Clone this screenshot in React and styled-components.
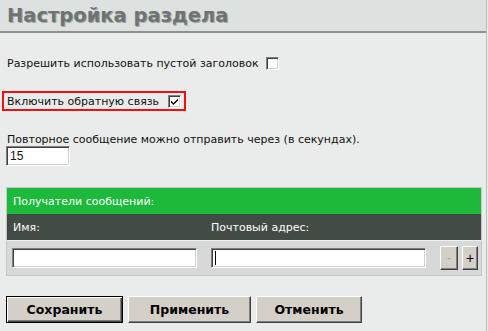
import React from "react";
import styled, { createGlobalStyle } from "styled-components";

const GlobalStyle = createGlobalStyle`
  * {
    margin: 0;
    padding: 0;
    box-sizing: border-box;
  }
  body {
    background: #e9ecea;
    font-family: Tahoma, "DejaVu Sans", sans-serif;
    font-size: 11px;
    color: #111;
  }
`

const Page = styled.div`
  width: 487px;
  min-height: 331px;
  border-right: 1px solid #b9bdbb;
`

const Header = styled.div`
  height: 33px;
  background: #dde1df;
  border-bottom: 2px solid #8e9190;
  padding-left: 7px;
  display: flex;
  align-items: center;
`

const Title = styled.h1`
  font-family: "DejaVu Sans", sans-serif;
  font-size: 19.5px;
  font-weight: bold;
  color: #6e7472;
  text-shadow: 1px 1px 0 #a3a8a6;
`

const Content = styled.div`
  padding: 0 6px;
`

const Row = styled.div`
  display: inline-flex;
  align-items: center;
  gap: ${p => (p.boxed ? 9 : 7)}px;
  margin-top: ${p => p.top}px;
  padding: ${p => (p.boxed ? "2px 3px 2px 3px" : "0 1px")};
  margin-left: ${p => (p.boxed ? "-4px" : "0")};
  border: ${p => (p.boxed ? "2px solid #ee1111" : "none")};
  height: ${p => (p.boxed ? "20px" : "auto")};
`

const Check = styled.span`
  width: 13px;
  height: 13px;
  background: #fff;
  border-top: 1px solid #808080;
  border-left: 1px solid #808080;
  border-right: 1px solid #fff;
  border-bottom: 1px solid #fff;
  box-shadow: inset 1px 1px 0 #404040, inset -1px -1px 0 #d4d0c8;
  display: inline-flex;
  align-items: center;
  justify-content: center;
`

const Label = styled.div`
  margin-top: 22px;
  padding-left: 1px;
`

const TextInput = styled.div`
  width: ${p => p.w}px;
  height: 20px;
  margin-left: ${p => p.ml || 0}px;
  background: #fff;
  border-top: 1px solid #808080;
  border-left: 1px solid #808080;
  border-right: 1px solid #fff;
  border-bottom: 1px solid #fff;
  box-shadow: inset 1px 1px 0 #404040, inset -1px -1px 0 #d4d0c8;
  padding: 2px 3px;
  font-size: 12px;
  font-family: "Liberation Sans", Arial, sans-serif;
  line-height: 15px;
  display: flex;
  align-items: center;
`

const Caret = styled.span`
  width: 1px;
  height: 14px;
  background: #000;
`

const Table = styled.div`
  margin-top: 21px;
  width: 476px;
  border: 1px solid #c3c7c5;
`

const GreenRow = styled.div`
  background: #1db93b;
  color: #fff;
  height: 26px;
  padding-left: 6px;
  display: flex;
  align-items: center;
`

const DarkRow = styled.div`
  background: #434b45;
  color: #fff;
  height: 27px;
  border-bottom: 1px solid #f0f0f0;
  display: grid;
  grid-template-columns: 198px 1fr;
  align-items: center;
  padding-left: 6px;
`

const InputRow = styled.div`
  background: #d6d9d7;
  height: 34px;
  display: flex;
  align-items: center;
  padding-left: 5px;
`

const SmallBtn = styled.div`
  width: ${p => p.w}px;
  height: 24px;
  margin-left: ${p => p.ml}px;
  background: #d4d0c8;
  border-top: 1px solid #fff;
  border-left: 1px solid #fff;
  border-right: 1px solid #404040;
  border-bottom: 1px solid #404040;
  box-shadow: inset -1px -1px 0 #808080;
  display: flex;
  align-items: center;
  justify-content: center;
  font-family: "Liberation Sans", Arial, sans-serif;
  font-size: 14px;
  color: ${p => p.c};
`

const Buttons = styled.div`
  display: flex;
  gap: 5px;
  margin-top: 20px;
`

const Button = styled.div`
  width: ${p => p.w}px;
  height: 27px;
  background: #d4d0c8;
  border: 1px solid ${p => (p.primary ? "#000" : "#fff")};
  border-right-color: ${p => (p.primary ? "#000" : "#404040")};
  border-bottom-color: ${p => (p.primary ? "#000" : "#404040")};
  box-shadow: ${p =>
    p.primary
      ? "inset 1px 1px 0 #fff, inset -1px -1px 0 #404040, inset -2px -2px 0 #808080"
      : "inset -1px -1px 0 #808080"};
  display: flex;
  align-items: center;
  justify-content: center;
  font-family: "DejaVu Sans", sans-serif;
  font-weight: bold;
  font-size: 12.5px;
  color: #000;
`

export default function App() {
  return (
    <>
      <GlobalStyle />
      <Page>
        <Header>
          <Title>Настройка раздела</Title>
        </Header>
        <Content>
          <div>
            <Row top={24}>
              Разрешить использовать пустой заголовок
              <Check />
            </Row>
          </div>
          <div>
            <Row top={21} boxed>
              Включить обратную связь
              <Check>
                <svg width="9" height="9" viewBox="0 0 9 9">
                  <path d="M1 3.5 L3.5 6 L8 1.5 L8 3.5 L3.5 8 L1 5.5 Z" fill="#000" />
                </svg>
              </Check>
            </Row>
          </div>
          <Label>Повторное сообщение можно отправить через (в секундах).</Label>
          <TextInput w={64}>15</TextInput>
          <Table>
            <GreenRow>Получатели сообщений:</GreenRow>
            <DarkRow>
              <span>Имя:</span>
              <span>Почтовый адрес:</span>
            </DarkRow>
            <InputRow>
              <TextInput w={185} />
              <TextInput w={215} ml={14}>
                <Caret />
              </TextInput>
              <SmallBtn w={18} ml={14} c="#aab">-</SmallBtn>
              <SmallBtn w={16} ml={4} c="#000">+</SmallBtn>
            </InputRow>
          </Table>
          <Buttons>
            <Button w={117} primary>Сохранить</Button>
            <Button w={123}>Применить</Button>
            <Button w={106}>Отменить</Button>
          </Buttons>
        </Content>
      </Page>
    </>
  );
}
